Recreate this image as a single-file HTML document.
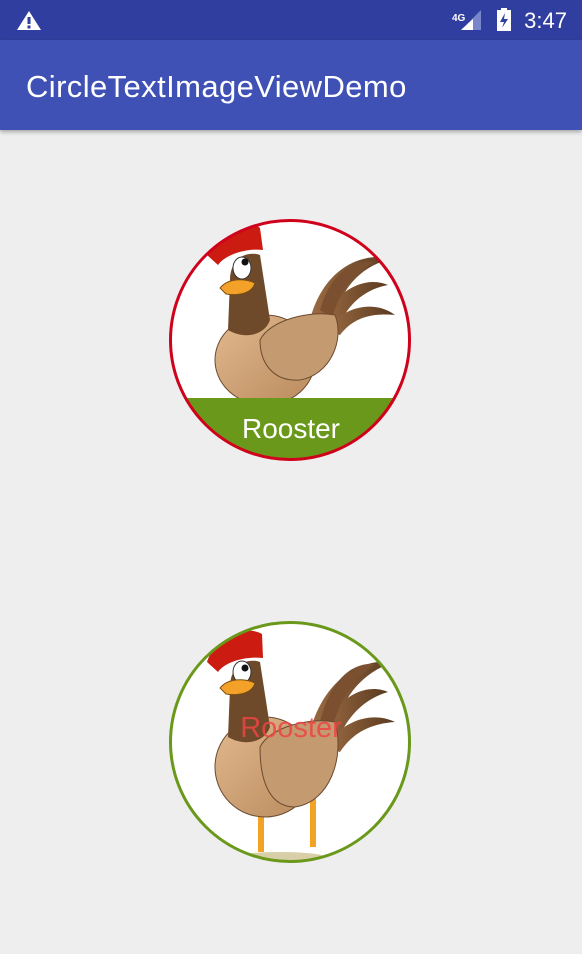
<!DOCTYPE html>
<html><head><style>
body{margin:0;width:582px;height:954px;background:#eeeeee;font-family:"Liberation Sans",sans-serif;overflow:hidden;position:relative}
.sb{position:absolute;left:0;top:0;width:582px;height:40px;background:#303f9f}
.ab{position:absolute;left:0;top:40px;width:582px;height:90px;background:#3f51b5;box-shadow:0 2px 4px rgba(0,0,0,.3)}
.ab span{position:absolute;left:26px;top:29px;color:#fff;font-size:31px;letter-spacing:0.4px}
.time{position:absolute;right:15px;top:8px;color:#fff;font-size:22px}
svg{position:absolute;left:0;top:0}
</style></head><body>
<div class="sb"></div>
<div class="ab"><span>CircleTextImageViewDemo</span></div>
<div class="time">3:47</div>
<svg width="582" height="954">
<polygon points="29,11 41,30 17,30" fill="#fff"/><rect x="27.5" y="17" width="3" height="7" fill="#303f9f"/><rect x="27.5" y="25.5" width="3" height="3" fill="#303f9f"/>
<text x="452" y="21" fill="#fff" font-size="10" font-weight="bold" font-family="Liberation Sans">4G</text>
<polygon points="461,30 481,30 481,10" fill="#7986cb"/><polygon points="461,30 473,30 473,19" fill="#fff"/>
<rect x="497" y="10" width="14" height="21" fill="#fff"/><rect x="501" y="8" width="6" height="3" fill="#fff"/>
<polygon points="505,13 500,22 504,22 502,28 508,19 504,19" fill="#303f9f"/>
<defs>
<clipPath id="c1"><circle cx="290" cy="340" r="119"/></clipPath>
<clipPath id="c2"><circle cx="290" cy="742" r="119"/></clipPath>
<linearGradient id="tan" x1="0" y1="0" x2="1" y2="1"><stop offset="0" stop-color="#e2b98f"/><stop offset="1" stop-color="#b98a5c"/></linearGradient>
<linearGradient id="tail" x1="0" y1="0" x2="1" y2="0"><stop offset="0" stop-color="#9b6b42"/><stop offset="1" stop-color="#5a3a20"/></linearGradient>
</defs>
<circle cx="290" cy="340" r="120" fill="#fff"/>
<g clip-path="url(#c1)">
 <g transform="translate(160,210)">
  <path d="M150,110 C160,70 190,40 235,48 C200,55 180,80 175,110 Z" fill="url(#tail)"/>
  <path d="M160,115 C175,80 205,65 228,75 C200,80 185,100 178,118 Z" fill="url(#tail)"/>
  <path d="M165,120 C185,95 215,90 235,105 C205,102 190,112 180,125 Z" fill="url(#tail)"/>
  <path d="M160,100 C170,65 190,50 215,52 C195,62 180,80 172,108 Z" fill="#7a5030"/>
  <ellipse cx="105" cy="150" rx="50" ry="45" fill="url(#tan)" stroke="#6b4a30" stroke-width="1"/>
  <path d="M70,70 C70,50 85,40 100,45 L110,110 C105,125 85,130 68,120 Z" fill="#6e4a2a"/>
  <path d="M100,130 C110,110 150,100 175,105 C185,130 170,165 140,170 C115,172 100,155 100,130 Z" fill="#c49a70" stroke="#6b4a30" stroke-width="1"/>
  <path d="M47,45 C55,20 85,5 100,18 L103,40 C85,38 65,45 58,55 Z" fill="#cc1b10"/>
  <ellipse cx="82" cy="58" rx="9" ry="11" fill="#fff" stroke="#333"/>
  <circle cx="85" cy="52" r="3.5" fill="#111"/>
  <path d="M60,78 C68,68 85,68 95,73 C92,83 80,86 66,84 Z" fill="#f4a12a" stroke="#7a4d10" stroke-width="1"/>
 </g>
 <rect x="160" y="398" width="260" height="80" fill="#6a981a"/>
</g>
<circle cx="290" cy="340" r="119.5" fill="none" stroke="#d0021b" stroke-width="3"/>
<text x="291" y="438" fill="#fff" font-size="28" text-anchor="middle" font-family="Liberation Sans">Rooster</text>
<circle cx="290" cy="742" r="120" fill="#fff"/>
<g clip-path="url(#c2)">
 <g transform="translate(160,622)">
  <path d="M150,110 C160,70 190,35 235,40 C200,50 180,80 175,110 Z" fill="url(#tail)"/>
  <path d="M160,115 C175,75 205,60 228,70 C200,78 185,100 178,118 Z" fill="url(#tail)"/>
  <path d="M165,125 C185,95 215,90 235,100 C205,102 190,115 180,130 Z" fill="url(#tail)"/>
  <path d="M160,100 C170,60 190,40 215,42 C195,55 180,75 172,108 Z" fill="#7a5030"/>
  <rect x="98" y="180" width="6" height="50" fill="#f2a224"/><rect x="150" y="175" width="6" height="50" fill="#f2a224"/>
  <ellipse cx="120" cy="235" rx="45" ry="5" fill="#d8cfa8"/>
  <ellipse cx="105" cy="145" rx="50" ry="50" fill="url(#tan)" stroke="#6b4a30" stroke-width="1"/>
  <path d="M70,65 C70,45 85,35 100,40 L110,105 C105,120 85,125 68,115 Z" fill="#6e4a2a"/>
  <path d="M100,125 C110,105 150,95 175,100 C185,135 170,180 135,185 C110,185 100,160 100,125 Z" fill="#c49a70" stroke="#6b4a30" stroke-width="1"/>
  <path d="M47,40 C55,15 85,2 102,12 L103,36 C85,34 65,40 58,50 Z" fill="#cc1b10"/>
  <ellipse cx="82" cy="50" rx="9" ry="11" fill="#fff" stroke="#333"/>
  <circle cx="85" cy="46" r="3.5" fill="#111"/>
  <path d="M60,66 C68,56 85,56 95,61 C92,71 80,74 66,72 Z" fill="#f4a12a" stroke="#7a4d10" stroke-width="1"/>
 </g>
</g>
<circle cx="290" cy="742" r="119.5" fill="none" stroke="#6a981a" stroke-width="3"/>
<text x="291" y="737" fill="#ee4444" fill-opacity="0.85" font-size="29" text-anchor="middle" font-family="Liberation Sans">Rooster</text>
</svg>
</body></html>
